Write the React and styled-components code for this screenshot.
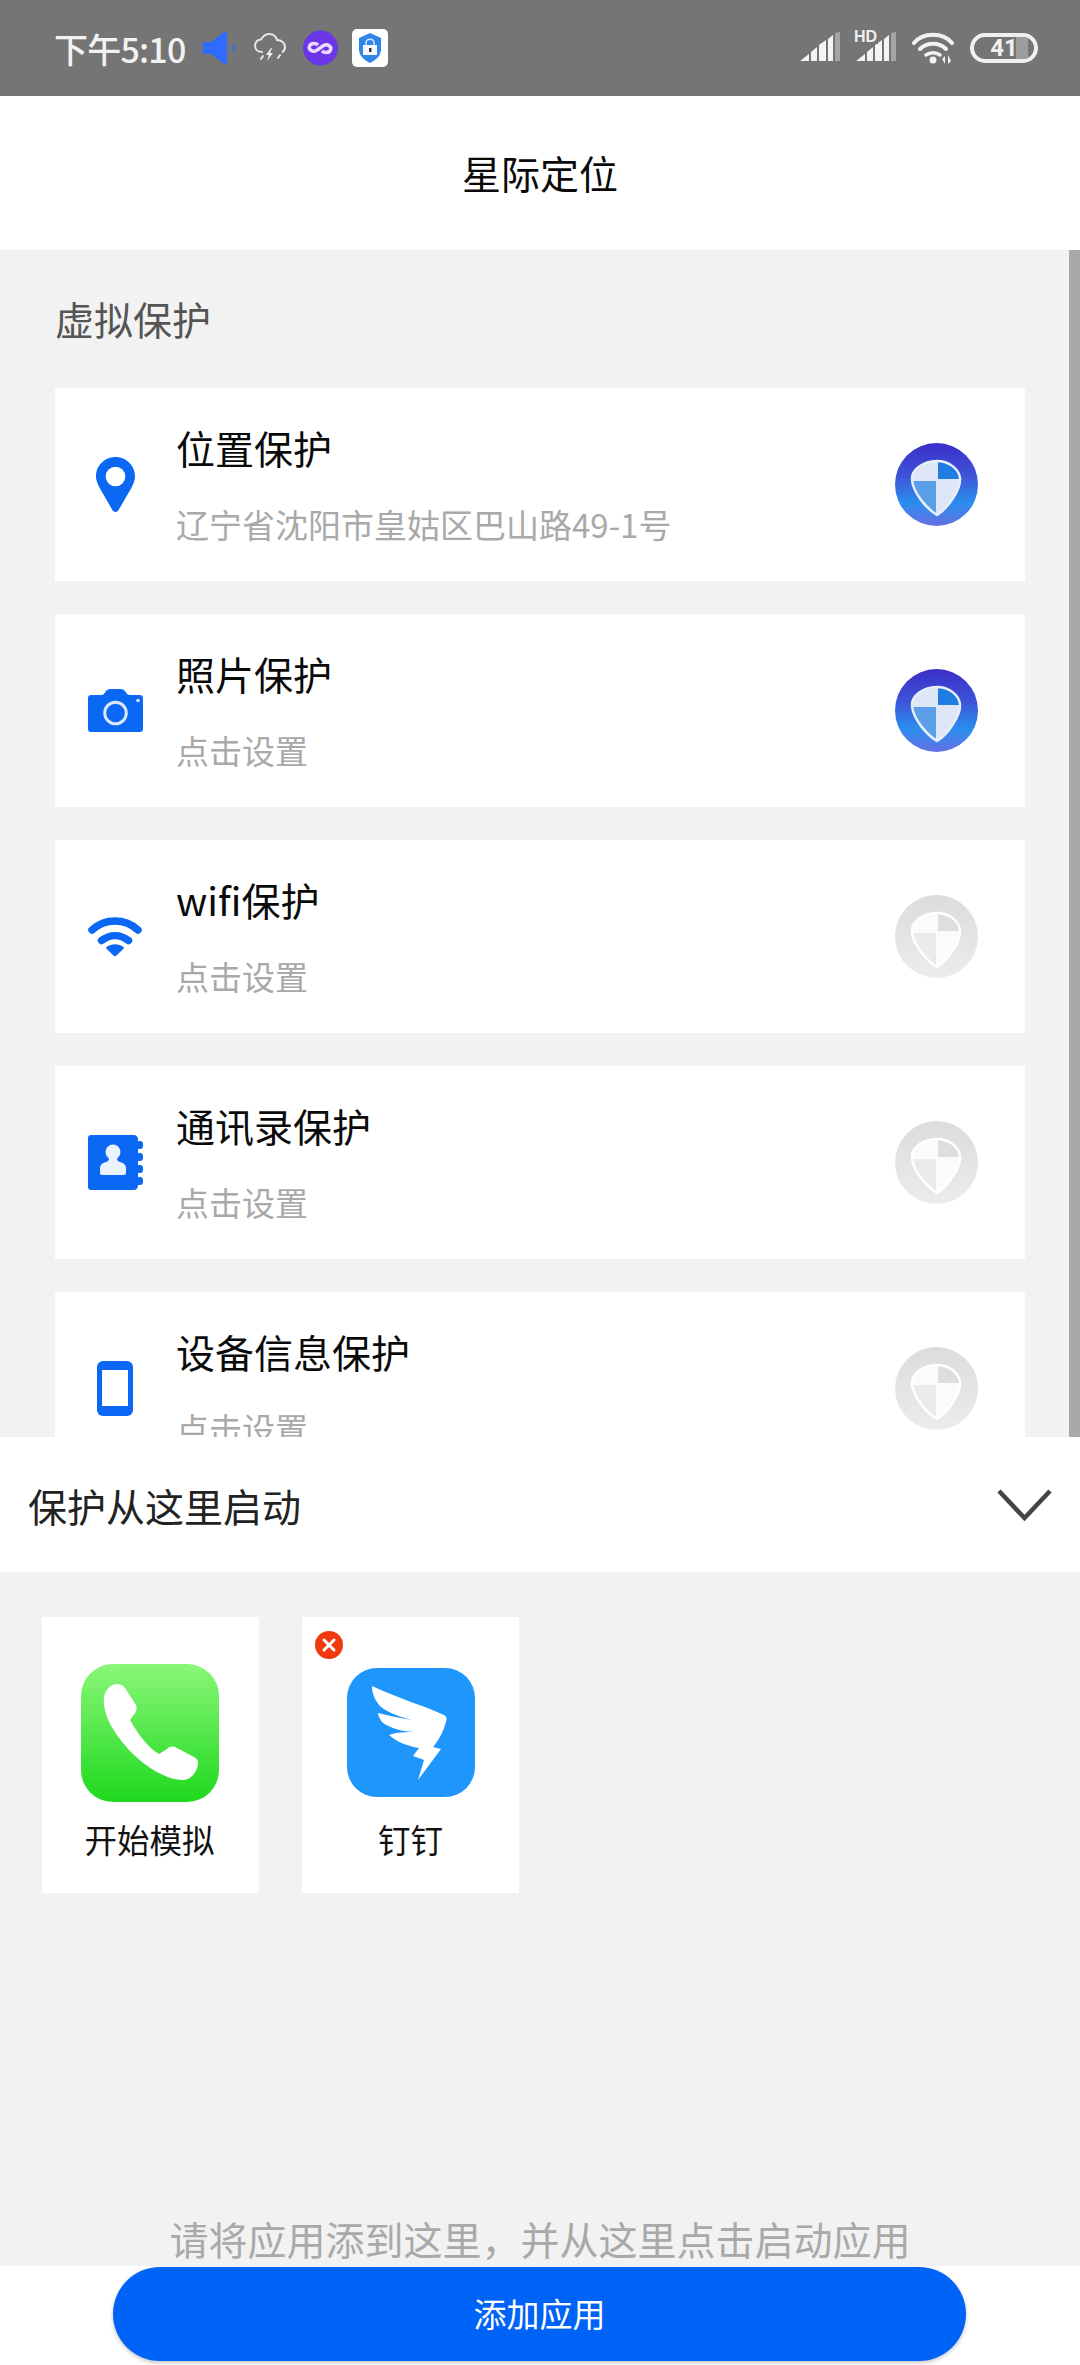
import React from "react";
import styled, { createGlobalStyle } from "styled-components";

const Global = createGlobalStyle`
  html, body { margin: 0; padding: 0; width: 1080px; height: 2365px; overflow: hidden; background: #fff; }
  body { font-family: "Noto Sans CJK SC", "Liberation Sans", sans-serif; }
  * { box-sizing: border-box; }
`;

const Page = styled.div`
  width: 1080px; height: 2365px; display: flex; flex-direction: column; overflow: hidden;
`;

/* status bar */
const StatusBar = styled.div`
  height: 96px; flex: none; background: #757575; display: flex; align-items: center;
  padding: 0 42px 0 54px; justify-content: space-between;
`;
const StatusLeft = styled.div`display: flex; align-items: center;`;
const StatusRight = styled.div`display: flex; align-items: center; gap: 14px;`;
const Time = styled.span`
  font-family: "Noto Sans CJK SC", sans-serif; font-size: 34px; font-weight: 500; color: #f2f2f2;
  line-height: 44px; letter-spacing: -0.8px; margin: 2px 18px 0 0; width: 131px; white-space: nowrap;
`;
const StatusIcon = styled.svg`display: block; flex: none; margin-right: ${p => p.$mr || 0}px;`;
const Battery = styled.div`
  width: 68px; height: 30px; border: 4px solid #f0f0f0; border-radius: 15px; position: relative;
  display: flex; align-items: center; justify-content: center; overflow: hidden; margin-left: 2px;
`;
const BatteryLevel = styled.div`
  position: absolute; left: 42px; top: 0; bottom: 0; width: 12px; background: #9c9c9c;
`;
const BatteryText = styled.span`
  position: relative; font-family: "Roboto", sans-serif; font-size: 24px; font-weight: 700; color: #f0f0f0; line-height: 22px;
`;

/* header */
const Header = styled.header`
  height: 154px; flex: none; background: #fff; display: flex; align-items: center; justify-content: center; padding-bottom: 3px;
`;
const HeaderTitle = styled.h1`
  margin: 0; font-size: 39px; font-weight: 400; color: #0a0a0a; line-height: 52px;
`;

/* scrolling area */
const Scroller = styled.main`
  height: 1187px; flex: none; background: #f2f2f2; padding: 42px 55px 0; overflow: hidden; position: relative;
`;
const ScrollThumb = styled.div`
  position: absolute; top: 0; right: 0; bottom: 0; width: 11px; background: #a9a9a9;
`;
const SectionTitle = styled.h2`
  margin: 0 0 44px; font-size: 39px; font-weight: 400; line-height: 52px; color: #555;
`;
const CardList = styled.div`display: flex; flex-direction: column; gap: 33px;`;
const Card = styled.section`
  height: 193px; flex: none; background: #fff; display: flex; align-items: center; padding-right: 47px;
`;
const CardIcon = styled.div`
  width: 121px; flex: none; display: flex; align-items: center; justify-content: center; padding-right: 1px;
`;
const CardText = styled.div`
  flex: 1; align-self: flex-start; padding-top: 33px; min-width: 0;
`;
const CardTitle = styled.div`
  font-size: 39px; line-height: 52px; color: #0a0a0a;
`;
const CardSub = styled.div`
  margin-top: 29px; font-size: 33px; line-height: 44px; color: #a9a9a9; white-space: nowrap;
`;

/* sheet */
const SheetHead = styled.div`
  height: 135px; flex: none; background: #fff; display: flex; align-items: center; justify-content: space-between;
  padding: 0 28px;
`;
const SheetTitle = styled.div`font-size: 39px; line-height: 52px; color: #222;`;
const Tray = styled.div`
  flex: 1; min-height: 0; background: #f2f2f2; display: flex; flex-direction: column; padding: 45px 41px 0;
`;
const Tiles = styled.div`display: flex; gap: 43px; padding-left: 1px;`;
const Tile = styled.div`
  width: 217px; height: 276px; background: #fff; position: relative; display: flex; flex-direction: column; align-items: center;
  padding: ${p => p.$top}px ${p => p.$nudge || 0}px 0 0;
`;
const TileLabel = styled.div`
  position: absolute; left: 0; right: ${p => p.$nudge || 0}px; top: 200px; text-align: center;
  font-size: 32.5px; line-height: 44px; color: #111;
`;
const RemoveBadge = styled.div`
  position: absolute; left: 13px; top: 14px; width: 28px; height: 28px; border-radius: 50%; background: #f03a0e;
  display: flex; align-items: center; justify-content: center;
`;
const Hint = styled.div`
  margin-top: auto; text-align: center; font-size: 39px; line-height: 52px; color: #a9a9a9; white-space: nowrap;
  padding-bottom: 2px;
`;

/* footer */
const Footer = styled.footer`
  height: 99px; flex: none; background: #fff; display: flex; justify-content: center; padding: 1px 1px 0 0;
`;
const AddButton = styled.button`
  width: 853px; height: 94px; border: 0; border-radius: 47px; background: #0063f7; color: #fff;
  font-family: inherit; font-size: 33px; line-height: 44px; box-shadow: 0 2px 4px rgba(0,0,0,.22); padding: 0 0 2px;
`;

const Blue = "#0a68f5";

const Pin = () => (
  <svg width="39" height="56" viewBox="0 0 39 56">
    <path fill={Blue} d="M19.5 0C8.7 0 0 8.6 0 19.3c0 4.3 1.6 8 3.7 11.6L16.4 53c1.4 2.6 4.8 2.6 6.2 0l12.7-22.1c2.1-3.6 3.7-7.3 3.7-11.6C39 8.6 30.3 0 19.5 0z" />
    <circle cx="19.5" cy="19.5" r="9.8" fill="#fff" />
  </svg>
);
const Camera = () => (
  <svg width="55" height="43" viewBox="0 0 55 43">
    <path fill={Blue} d="M3 6h10c2 0 3-.8 4-2.500C18.200 1.200 20 0 22 0h11c2 0 3.800 1.200 5 3.500C39 5.200 40 6 42 6h10c1.700 0 3 1.300 3 3v31c0 1.700-1.300 3-3 3H3c-1.700 0-3-1.300-3-3V9c0-1.700 1.300-3 3-3z" />
    <circle cx="27.500" cy="24" r="10.800" fill="none" stroke="#dbe8fb" strokeWidth="3" />
    <circle cx="50" cy="11.500" r="1.800" fill="#dbe8fb" />
  </svg>
);
const Wifi = () => (
  <svg width="54" height="39" viewBox="0 0 54 39">
    <g fill="none" stroke={Blue} strokeWidth="7.500" strokeLinecap="round">
      <path d="M4 13C17 1 37 1 50 13" />
      <path d="M13.500 23.500c8.500-6.500 18.500-6.500 27 0" />
    </g>
    <path fill={Blue} d="M18.500 30c5-3.800 12-3.800 17 0 .6.500.6 1.200 0 1.800l-7 6.600c-.8.800-2.200.8-3 0l-7-6.600c-.6-.6-.6-1.300 0-1.800z" />
  </svg>
);
const Contacts = () => (
  <svg width="55" height="55" viewBox="0 0 55 55">
    <path fill={Blue} d="M3 0h43c2 0 4 1.800 4 4v47c0 2.200-2 4-4 4H3c-1.700 0-3-1.300-3-3V3c0-1.700 1.300-3 3-3z" />
    <g fill={Blue}>
      <rect x="48" y="6" width="7" height="8" rx="3" />
      <rect x="48" y="18" width="7" height="8" rx="3" />
      <rect x="48" y="30" width="7" height="8" rx="3" />
      <rect x="48" y="42" width="7" height="8" rx="3" />
    </g>
    <circle cx="25" cy="17" r="7.500" fill="#eaf2fe" />
    <path fill="#eaf2fe" d="M21 23h8c0 2.500 1 3.500 3 4 4 1 6 3 6 6v5c0 1.200-.8 2-2 2H14c-1.200 0-2-.8-2-2v-5c0-3 2-5 6-6 2-.5 3-1.500 3-4z" />
  </svg>
);
const Device = () => (
  <svg width="36" height="55" viewBox="0 0 36 55">
    <rect width="36" height="55" rx="6" fill={Blue} />
    <rect x="5" y="9" width="26" height="36" fill="#fff" />
  </svg>
);

const Shield = ({ on, id }) => (
  <svg width="83" height="83" viewBox="0 0 83 83" style={{ display: "block", flex: "none" }}>
    <defs>
      <linearGradient id={`g${id}`} x1="0" y1="0" x2="0" y2="1">
        {on ? (
          <>
            <stop offset="0" stopColor="#3b2dc9" />
            <stop offset=".4" stopColor="#3d55d8" />
            <stop offset=".72" stopColor="#2a8eee" />
            <stop offset="1" stopColor="#6570e2" />
          </>
        ) : (
          <>
            <stop offset="0" stopColor="#dcdcdc" />
            <stop offset="1" stopColor="#ececec" />
          </>
        )}
      </linearGradient>
      <clipPath id={`c${id}`}>
        <path d="M42 18C54 18 64 26 65 35 66 47 52 66 42 72 32 66 18 50 17 37 16 27 28 18 42 18Z" />
      </clipPath>
    </defs>
    <circle cx="41.500" cy="41.500" r="41.500" fill={`url(#g${id})`} />
    <g clipPath={`url(#c${id})`}>
      <rect x="0" y="0" width="83" height="83" fill={on ? "#dde7f7" : "#fbfbfb"} />
      <rect x="43" y="0" width="40" height="36" fill={on ? "#1f7ce0" : "#dedede"} />
      <rect x="0" y="38" width="41" height="45" fill={on ? "#5b9fe9" : "#ebebeb"} />
    </g>
    <path d="M42 18C54 18 64 26 65 35 66 47 52 66 42 72 32 66 18 50 17 37 16 27 28 18 42 18Z" fill="none" stroke={on ? "#e8eefa" : "#fff"} strokeWidth="2.500" />
  </svg>
);

const Bars = () => (
  <StatusIcon width="42" height="32" viewBox="0 0 42 32">
    <path fill="#f4f4f4" d="M0 29 9 22v7zM11 20l6-5v14h-6zM19 13l7-5v21h-7zM28 7l5-4v26h-5z" />
    <path fill="#a5a5a5" d="M35 1l5-1v29h-5z" />
  </StatusIcon>
);

const HdBars = styled.div`position: relative; display: flex;`;
const HdLabel = styled.span`
  position: absolute; left: -2px; top: -3px; font-family: "Liberation Sans", sans-serif; font-size: 16px; font-weight: 700; line-height: 15px; color: #eee; padding-right: 1px; background: #757575;
`;

export default function App() {
  const rows = [
    ["位置保护", "辽宁省沈阳市皇姑区巴山路49-1号", <Pin />, true],
    ["照片保护", "点击设置", <Camera />, true],
    ["wifi保护", "点击设置", <Wifi />, false],
    ["通讯录保护", "点击设置", <Contacts />, false],
    ["设备信息保护", "点击设置", <Device />, false],
  ];
  return (
    <Page>
      <Global />
      <StatusBar>
        <StatusLeft>
          <Time>下午5:10</Time>
          <StatusIcon $mr={18} width="33" height="34" viewBox="0 0 33 34">
            <path fill="#2f6bff" d="M0 11h8L21 1c1-.8 3 0 3 1.500v29c0 1.500-2 2.300-3 1.500L8 23H0z" />
            <rect x="29" y="13" width="3" height="9" fill="#2f6bff" opacity=".6" />
          </StatusIcon>
          <StatusIcon $mr={17} width="32" height="30" viewBox="0 0 32 30">
            <path fill="none" stroke="#e8e8e8" strokeWidth="2" strokeLinecap="round" d="M8 19C3 19 1 15.500 1 12.500 1 9 4 6.500 7 6.500 9 3 12 1 15 1c4 0 7 2.500 8 6 4.500 0 8 3 8 7 0 2-1 4-2.500 5" />
            <path fill="#f2f2f2" d="M17 15l-5 7h3l-2 6 6-8h-3l2-5z" />
            <path stroke="#e8e8e8" strokeWidth="2" strokeLinecap="round" d="M9 23l-2 3M26 22l-2 3" />
          </StatusIcon>
          <StatusIcon $mr={14} width="35" height="38" viewBox="0 0 35 38">
            <circle cx="17.500" cy="19" r="17.500" fill="#6b35e8" />
            <path fill="none" stroke="#eadcff" strokeWidth="3.500" d="M15 16c-2-2-7-2.500-8.500 1-1.500 3.500 3 6.500 7 4.500l7-5c4-2 8.500 1 7 4.500-1.500 3.500-6.500 3-8.500 1" />
          </StatusIcon>
          <StatusIcon width="36" height="38" viewBox="0 0 36 38">
            <rect width="36" height="38" rx="5" fill="#fff" />
            <path fill="#2f85e8" d="M18 4l11 5v11c0 7-5 11-11 14-6-3-11-7-11-14V9z" />
            <rect x="11" y="16" width="14" height="10" fill="#f4f8fe" />
            <rect x="17" y="19" width="2.500" height="4" fill="#333" />
            <path fill="none" stroke="#cfe3fb" strokeWidth="1.500" d="M14 16v-2c0-5 8-5 8 0v2" />
          </StatusIcon>
        </StatusLeft>
        <StatusRight>
          <Bars />
          <HdBars>
            <Bars />
            <HdLabel>HD</HdLabel>
          </HdBars>
          <StatusIcon width="42" height="32" viewBox="0 0 42 32">
            <g fill="none" stroke="#f2f2f2" strokeLinecap="round">
              <path strokeWidth="4" d="M2 11C11 0 31 0 40 11" />
              <path strokeWidth="4" d="M8 17c7-7 19-7 26 0" />
              <path strokeWidth="3.500" d="M14 23c4-3 10-3 14 0" />
            </g>
            <circle cx="21" cy="28" r="3.500" fill="#f2f2f2" />
            <path fill="#f2f2f2" d="M33 32V24l-3 3zM36 23v9l3-3z" />
          </StatusIcon>
          <Battery>
            <BatteryLevel />
            <BatteryText>41</BatteryText>
          </Battery>
        </StatusRight>
      </StatusBar>

      <Header>
        <HeaderTitle>星际定位</HeaderTitle>
      </Header>

      <Scroller>
        <SectionTitle>虚拟保护</SectionTitle>
        <CardList>
          {rows.map(([title, sub, icon, on], i) => (
            <Card key={title}>
              <CardIcon>{icon}</CardIcon>
              <CardText>
                <CardTitle>{title}</CardTitle>
                <CardSub>{sub}</CardSub>
              </CardText>
              <Shield on={on} id={i} />
            </Card>
          ))}
        </CardList>
        <ScrollThumb />
      </Scroller>

      <SheetHead>
        <SheetTitle>保护从这里启动</SheetTitle>
        <svg width="55" height="33" viewBox="0 0 55 33">
          <path d="M2 3 27.500 30 53 3" fill="none" stroke="#444" strokeWidth="4.500" />
        </svg>
      </SheetHead>

      <Tray>
        <Tiles>
          <Tile $top={47} $nudge={2}>
            <svg width="138" height="138" viewBox="0 0 138 138">
              <defs>
                <linearGradient id="ph" x1="0" y1="0" x2="0" y2="1">
                  <stop offset="0" stopColor="#8bf678" />
                  <stop offset="1" stopColor="#1ed91e" />
                </linearGradient>
              </defs>
              <rect width="138" height="138" rx="32" fill="url(#ph)" />
              <path fill="#fff" d="M36 20C30 20 24 26 23 33 21 52 35 72 50 88 66 104 86 116 102 116 110 116 116 108 117 100 118 97 116 95 113 93L96 84C92 82 89 82 86 85L78 90C68 84 58 72 49 56L54 49C56 46 56 44 55 41L44 24C42 21 39 20 36 20Z" />
            </svg>
            <TileLabel $nudge={2}>开始模拟</TileLabel>
          </Tile>
          <Tile $top={51}>
            <RemoveBadge>
              <svg width="16" height="16" viewBox="0 0 16 16">
                <path d="M3 3l10 10M13 3 3 13" stroke="#fff" strokeWidth="3" strokeLinecap="round" />
              </svg>
            </RemoveBadge>
            <svg width="128" height="129" viewBox="0 0 128 129">
              <rect width="128" height="129" rx="30" fill="#1f96fb" />
              <path fill="#fff" d="M25 18C50 30 78 38 97 47 100 49 100 51 99 54 96 64 92 72 86 79L94 81 71 112 77 92 66 88 72 80C60 78 50 74 42 67 50 64 60 64 69 64 56 64 42 60 35 54 33 51 31 48 31 45 42 48 54 50 65 52 50 48 40 44 33 38 28 32 25 26 25 18Z" />
            </svg>
            <TileLabel>钉钉</TileLabel>
          </Tile>
        </Tiles>
        <Hint>请将应用添到这里，并从这里点击启动应用</Hint>
      </Tray>

      <Footer>
        <AddButton>添加应用</AddButton>
      </Footer>
    </Page>
  );
}
